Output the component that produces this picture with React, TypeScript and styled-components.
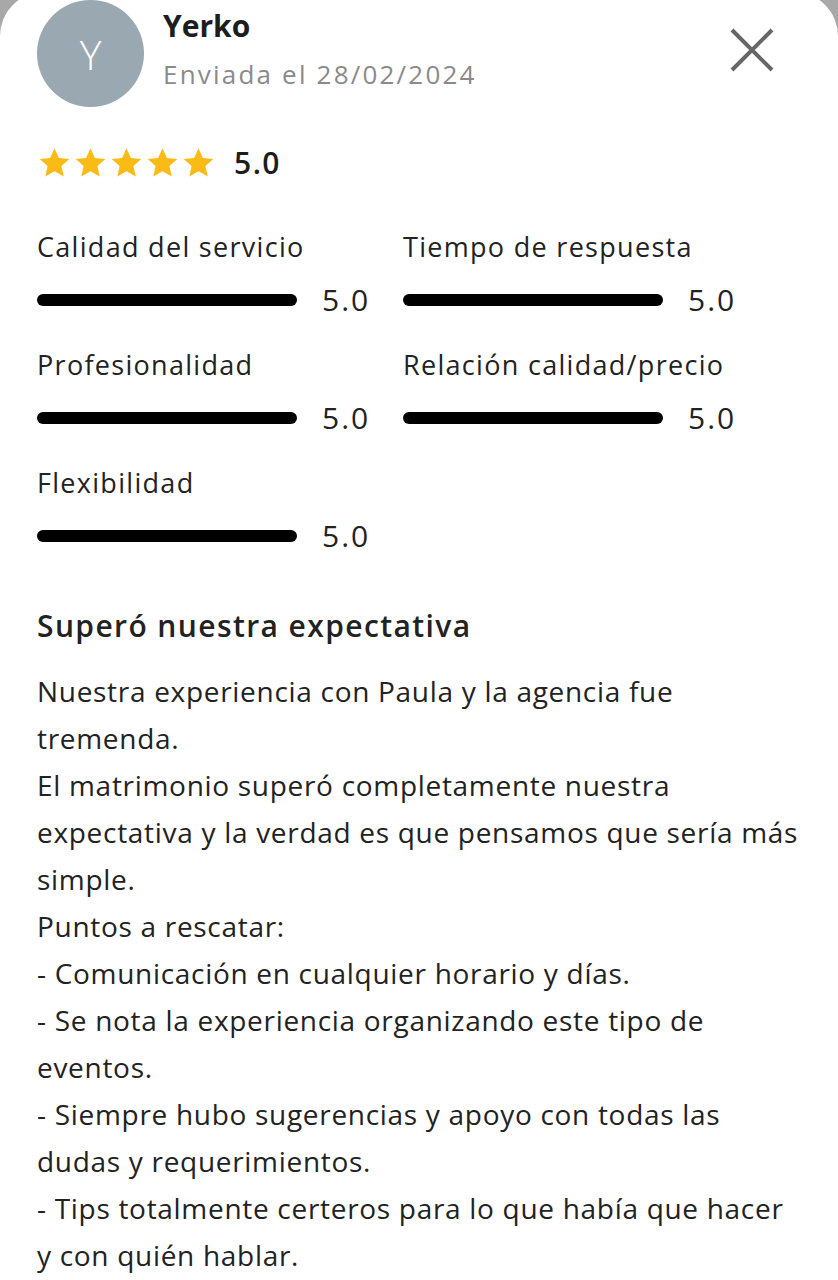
import styled, { createGlobalStyle } from 'styled-components';

const GlobalStyle = createGlobalStyle`
  body {
    margin: 0;
    background: #a8a8a8;
    font-family: 'Open Sans', 'Liberation Sans', sans-serif;
    color: #222;
  }
`;

const Sheet = styled.div`
  margin-top: -8px;
  background: #fff;
  border-radius: 44px 44px 0 0;
  min-height: 1288px;
  padding: 8px 37px 0 37px;
  box-sizing: border-box;
`;

const Header = styled.div`
  display: flex;
  align-items: flex-start;
`;

const Avatar = styled.div`
  width: 107px;
  height: 107px;
  border-radius: 50%;
  background: #9aa8b1;
  color: #fff;
  display: flex;
  align-items: center;
  justify-content: center;
  font-size: 41px;
  font-weight: 300;
  flex-shrink: 0;
`;

const Who = styled.div`
  margin-left: 19px;
  flex: 1;
`;

const Name = styled.div`
  font-size: 30px;
  font-weight: 700;
  line-height: 36px;
  margin-top: 8px;
  color: #1d1d1d;
`;

const Sent = styled.div`
  font-size: 26px;
  letter-spacing: 2.2px;
  line-height: 36px;
  color: #8a8a8a;
  margin-top: 12px;
`;

const Close = styled.button`
  border: 0;
  background: none;
  padding: 0;
  margin: 27px 26px 0 0;
  width: 46px;
  height: 46px;
  cursor: pointer;
`;

const StarRow = styled.div`
  display: flex;
  align-items: center;
  margin-top: 35px;
`;

const Stars = styled.div`
  display: flex;
  gap: 1px;
`;

const Score = styled.span`
  font-size: 30px;
  font-weight: 600;
  letter-spacing: 1.5px;
  margin-left: 18px;
  color: #1d1d1d;
`;

const Grid = styled.div`
  display: grid;
  grid-template-columns: 366px 366px;
  row-gap: 32px;
  margin-top: 48px;
`;

const Metric = styled.div`
  display: flex;
  flex-direction: column;
`;

const Label = styled.div`
  font-size: 27px;
  letter-spacing: 1.3px;
  line-height: 32px;
  white-space: nowrap;
  color: #222;
`;

const BarRow = styled.div`
  display: flex;
  align-items: center;
  margin-top: 20px;
`;

const Bar = styled.div`
  width: 260px;
  height: 12px;
  border-radius: 6px;
  background: #000;
`;

const Value = styled.span`
  font-size: 30px;
  letter-spacing: 2px;
  line-height: 34px;
  margin-left: 25px;
  color: #222;
`;

const Title = styled.h2`
  font-size: 30px;
  font-weight: 600;
  letter-spacing: 1.4px;
  line-height: 36px;
  margin: 55px 0 0;
  color: #222;
`;

const Body = styled.div`
  font-size: 28px;
  letter-spacing: 0.7px;
  line-height: 47px;
  margin-top: 24px;
  white-space: nowrap;
  color: #222;
`;

const Line = styled.div``;

const Star = () => (
  <svg width="35" height="34" viewBox="0 0 24 24">
    <path
      fill="#fbbb17"
      d="M12 1.6l3.1 6.9 7.4.7-5.6 5 1.6 7.4L12 17.8l-6.5 3.8 1.6-7.4-5.6-5 7.4-.7z"
    />
  </svg>
);

const metrics = [
  'Calidad del servicio',
  'Tiempo de respuesta',
  'Profesionalidad',
  'Relación calidad/precio',
  'Flexibilidad',
];

// line breaks as they fall in the app
const lines = [
  'Nuestra experiencia con Paula y la agencia fue',
  'tremenda.',
  'El matrimonio superó completamente nuestra',
  'expectativa y la verdad es que pensamos que sería más',
  'simple.',
  'Puntos a rescatar:',
  '- Comunicación en cualquier horario y días.',
  '- Se nota la experiencia organizando este tipo de',
  'eventos.',
  '- Siempre hubo sugerencias y apoyo con todas las',
  'dudas y requerimientos.',
  '- Tips totalmente certeros para lo que había que hacer',
  'y con quién hablar.',
];

export default function App() {
  return (
    <>
      <GlobalStyle />
      <Sheet>
        <Header>
          <Avatar>Y</Avatar>
          <Who>
            <Name>Yerko</Name>
            <Sent>Enviada el 28/02/2024</Sent>
          </Who>
          <Close aria-label="Cerrar">
            <svg width="46" height="46" viewBox="0 0 46 46">
              <path d="M3 3L43 43M43 3L3 43" stroke="#666" strokeWidth="4" />
            </svg>
          </Close>
        </Header>

        <StarRow>
          <Stars>
            {[0, 1, 2, 3, 4].map(i => (
              <Star key={i} />
            ))}
          </Stars>
          <Score>5.0</Score>
        </StarRow>

        <Grid>
          {metrics.map(m => (
            <Metric key={m}>
              <Label>{m}</Label>
              <BarRow>
                <Bar />
                <Value>5.0</Value>
              </BarRow>
            </Metric>
          ))}
        </Grid>

        <Title>Superó nuestra expectativa</Title>
        <Body>
          {lines.map((l, i) => (
            <Line key={i}>{l}</Line>
          ))}
        </Body>
      </Sheet>
    </>
  );
}
